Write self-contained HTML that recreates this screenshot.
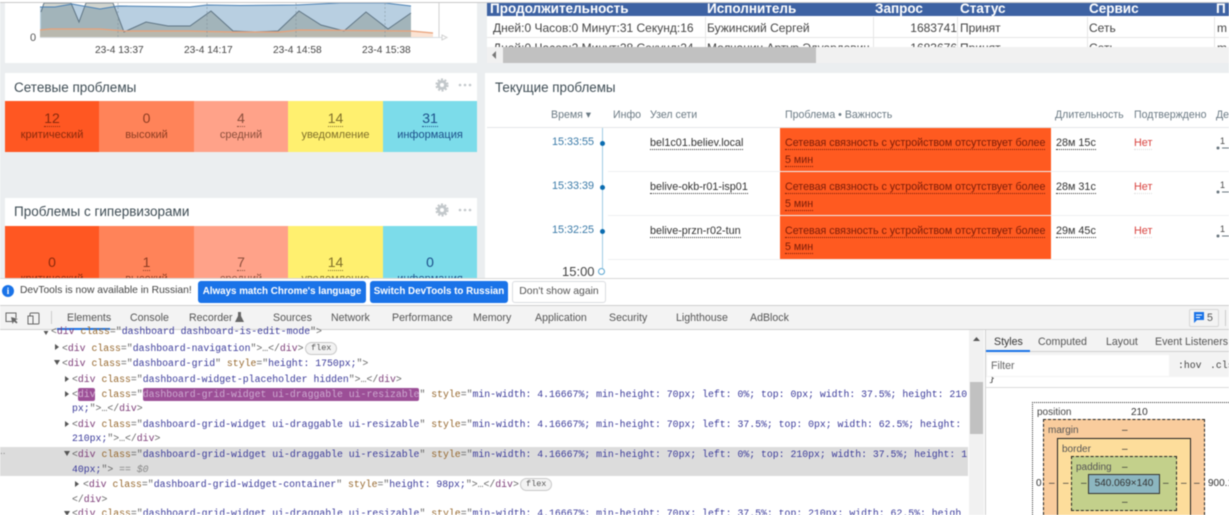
<!DOCTYPE html>
<html><head><meta charset="utf-8"><style>
html,body{margin:0;padding:0;width:1229px;height:515px;overflow:hidden;background:#fff}
body{font-family:"Liberation Sans",sans-serif;position:relative}
#w{position:absolute;left:0;top:0;width:1229px;height:515px;overflow:hidden;filter:blur(.45px)}
.a,.t{position:absolute}
.t{white-space:nowrap;line-height:14px}
.c{text-align:center}
.u{border-bottom:1px dotted currentColor}
.m{font-family:"Liberation Mono",monospace;font-size:9.82px;color:#666;line-height:14px;position:absolute;white-space:pre}
.g{color:#7c3c78}.n{color:#96682e}.v{color:#3b3b9a}
.s{color:#545454}
.h{position:absolute;top:-2px;font-weight:bold;color:#fff;font-size:13.5px;line-height:16px;white-space:nowrap}
.d{position:absolute;top:0;font-size:12px;color:#444;line-height:20px;white-space:nowrap}
.tab{position:absolute;top:311px;font-size:10.6px;line-height:14px;color:#555;white-space:nowrap}
.cell{position:absolute;text-align:center;font-size:11px;line-height:13px}
.num{font-size:14px;display:inline-block;line-height:15px;border-bottom:1px dotted currentColor;margin-bottom:2px}
.pill{position:absolute;border:1px solid #c8c8c8;border-radius:7px;background:#f3f3f3;color:#555;font:8.5px/10px "Liberation Mono",monospace;padding:0 5px;height:11px}
.ptext{color:#7a1d08;font-size:10.7px;line-height:14px;position:absolute;white-space:nowrap}
</style></head><body><div id="w">

<!-- page background -->
<div class="a" style="left:0;top:0;width:1229px;height:278px;background:#ebeef0"></div>
<div class="a" style="left:0;top:0;width:1229px;height:2px;background:#fff"></div>
<div class="a" style="left:0;top:2px;width:1229px;height:1px;background:#c9c9c9"></div>

<!-- chart widget -->
<div class="a" style="left:5px;top:3px;width:472px;height:60px;background:#fff"></div>
<svg class="a" style="left:0;top:3px" width="480" height="61" viewBox="0 3 480 61">
<polygon points="40,37 40,7 55,7 72,4 100,9 118,6 190,7 207,5 240,5.5 296,5 340,3 385,3 411,6 411,37" fill="#b8cfe1"/>
<polygon points="41,37 41,12 44,3 71,3 79,22 86,3 113,3 124,32 146,22 168,26 190,26 211,11 233,31 255,32 278,31 299,11 321,25 344,31 366,12 388,29 411,13 411,37" fill="#78826e" fill-opacity=".34"/>
<polygon points="40,37 40,30 50,29 100,29 124,31 190,31 233,32 280,32 299,30 411,31 411,37" fill="#b9b8ae"/>
<polygon points="411,31 433,33 433,37 411,37" fill="#fbe3d3"/>
<polyline points="41,12 44,3 71,3 79,22 86,3 113,3 124,32 146,22 168,26 190,26 211,11 233,31 255,32 278,31 299,11 321,25 344,31 366,12 388,29 411,13" fill="none" stroke="#5f7585" stroke-width="1"/>
<polyline points="40,7 55,7 72,4 100,9 118,6 190,7 207,5 240,5.5 296,5 340,3 385,3 411,6" fill="none" stroke="#4a80b4" stroke-width="1"/>
<polyline points="40,30 50,29 100,29 124,31 190,31 233,32 280,32 299,30 411,31 433,33" fill="none" stroke="#e9a27a" stroke-width="1.2"/>
<g stroke="#7d8b95" stroke-width=".5" stroke-dasharray="2 2"><line x1="118" y1="3" x2="118" y2="37"/><line x1="207" y1="3" x2="207" y2="37"/><line x1="296" y1="3" x2="296" y2="37"/><line x1="385" y1="3" x2="385" y2="37"/></g>
<line x1="439" y1="3" x2="439" y2="37" stroke="#d3d3d3"/>
<line x1="40" y1="37.5" x2="442" y2="37.5" stroke="#d8dde0"/>
<path d="M442 35l5 2.5-5 2.5z" fill="#fff" stroke="#d3d3d3"/>
</svg>
<div class="t" style="left:30px;top:31px;font-size:11px;color:#555">0</div>
<div class="t" style="left:95px;top:44px;font-size:10.2px;color:#444">23-4 13:37</div>
<div class="t" style="left:184px;top:44px;font-size:10.2px;color:#444">23-4 14:17</div>
<div class="t" style="left:273px;top:44px;font-size:10.2px;color:#444">23-4 14:58</div>
<div class="t" style="left:362px;top:44px;font-size:10.2px;color:#444">23-4 15:38</div>

<!-- widget 1 -->
<div class="a" style="left:5px;top:73px;width:472px;height:28px;background:#fff"></div>
<div class="t" style="left:14px;top:81px;font-size:13.5px;color:#3f4d55">Сетевые проблемы</div>
<svg class="a" style="left:435px;top:78px" width="40" height="14" viewBox="0 0 40 14"><circle cx="7" cy="7" r="3.5" fill="none" stroke="#c3c8cb" stroke-width="3"/><circle cx="7" cy="7" r="5.6" fill="none" stroke="#c3c8cb" stroke-width="2" stroke-dasharray="2 1.6"/><circle cx="25" cy="7" r="1.3" fill="#c3c8cb"/><circle cx="30" cy="7" r="1.3" fill="#c3c8cb"/><circle cx="35" cy="7" r="1.3" fill="#c3c8cb"/></svg>

<div class="a" style="left:5px;top:101px;width:94px;height:51px;background:#ff5722"></div>
<div class="a" style="left:99px;top:101px;width:95px;height:51px;background:#ff8359"></div>
<div class="a" style="left:194px;top:101px;width:94px;height:51px;background:#ffa289"></div>
<div class="a" style="left:288px;top:101px;width:95px;height:51px;background:#fff06f"></div>
<div class="a" style="left:383px;top:101px;width:94px;height:51px;background:#7cdcea"></div>
<div class="cell" style="left:5px;top:111px;width:94px;color:#8a2a0c"><span class="num">12</span><br>критический</div>
<div class="cell" style="left:99px;top:111px;width:95px;color:#8d3d22"><span class="num" style="border-color:transparent">0</span><br>высокий</div>
<div class="cell" style="left:194px;top:111px;width:94px;color:#8c4f3c"><span class="num">4</span><br>средний</div>
<div class="cell" style="left:288px;top:111px;width:95px;color:#80702a"><span class="num">14</span><br>уведомление</div>
<div class="cell" style="left:383px;top:111px;width:94px;color:#1c4f8a"><span class="num">31</span><br>информация</div>

<!-- widget 2 -->
<div class="a" style="left:5px;top:198px;width:472px;height:28px;background:#fff"></div>
<div class="t" style="left:14px;top:205px;font-size:13.5px;color:#3f4d55">Проблемы с гипервизорами</div>
<svg class="a" style="left:435px;top:203px" width="40" height="14" viewBox="0 0 40 14"><circle cx="7" cy="7" r="3.5" fill="none" stroke="#c3c8cb" stroke-width="3"/><circle cx="7" cy="7" r="5.6" fill="none" stroke="#c3c8cb" stroke-width="2" stroke-dasharray="2 1.6"/><circle cx="25" cy="7" r="1.3" fill="#c3c8cb"/><circle cx="30" cy="7" r="1.3" fill="#c3c8cb"/><circle cx="35" cy="7" r="1.3" fill="#c3c8cb"/></svg>
<div class="a" style="left:5px;top:226px;width:94px;height:52px;background:#ff5722"></div>
<div class="a" style="left:99px;top:226px;width:95px;height:52px;background:#ff8359"></div>
<div class="a" style="left:194px;top:226px;width:94px;height:52px;background:#ffa289"></div>
<div class="a" style="left:288px;top:226px;width:95px;height:52px;background:#fff06f"></div>
<div class="a" style="left:383px;top:226px;width:94px;height:52px;background:#7cdcea"></div>
<div class="cell" style="left:5px;top:255px;width:94px;color:#8a2a0c"><span class="num" style="border-color:transparent">0</span><br>критический</div>
<div class="cell" style="left:99px;top:255px;width:95px;color:#8d3d22"><span class="num">1</span><br>высокий</div>
<div class="cell" style="left:194px;top:255px;width:94px;color:#8c4f3c"><span class="num">7</span><br>средний</div>
<div class="cell" style="left:288px;top:255px;width:95px;color:#80702a"><span class="num">14</span><br>уведомление</div>
<div class="cell" style="left:383px;top:255px;width:94px;color:#1c4f8a"><span class="num" style="border-color:transparent">0</span><br>информация</div>

<!-- right table -->
<div class="a" style="left:487px;top:3px;width:742px;height:60px;background:#fff"></div>
<div class="a" style="left:487px;top:3px;width:742px;height:13px;background:#3d62a3;overflow:hidden">
 <div class="h" style="left:3px">Продолжительность</div>
 <div class="h" style="left:220px">Исполнитель</div>
 <div class="h" style="left:388px">Запрос</div>
 <div class="h" style="left:473px">Статус</div>
 <div class="h" style="left:602px">Сервис</div>
 <div class="h" style="left:729px">П</div>
</div>
<div class="a" style="left:487px;top:17px;width:742px;height:30px;overflow:hidden">
 <div class="d" style="left:6px;top:1px">Дней:0 Часов:0 Минут:31 Секунд:16</div>
 <div class="d" style="left:220px;top:1px">Бужинский Сергей</div>
 <div class="d" style="left:410px;top:1px;width:60px;text-align:right">1683741</div>
 <div class="d" style="left:473px;top:1px">Принят</div>
 <div class="d" style="left:602px;top:1px">Сеть</div>
 <div class="d" style="left:730px;top:1px">m</div>
 <div class="d" style="left:6px;top:21px">Дней:0 Часов:2 Минут:28 Секунд:24</div>
 <div class="d" style="left:220px;top:21px">Молчанин Артур Эдуардович</div>
 <div class="d" style="left:410px;top:21px;width:60px;text-align:right">1683676</div>
 <div class="d" style="left:473px;top:21px">Принят</div>
 <div class="d" style="left:602px;top:21px">Сеть</div>
 <div class="d" style="left:730px;top:21px">m</div>
 <div class="a" style="left:0;top:20px;width:742px;height:1px;background:#e6e6e6"></div>
 <div class="a" style="left:218px;top:0;width:1px;height:30px;background:#e6e6e6"></div>
 <div class="a" style="left:386px;top:0;width:1px;height:30px;background:#e6e6e6"></div>
 <div class="a" style="left:470px;top:0;width:1px;height:30px;background:#e6e6e6"></div>
 <div class="a" style="left:600px;top:0;width:1px;height:30px;background:#e6e6e6"></div>
 <div class="a" style="left:727px;top:0;width:1px;height:30px;background:#e6e6e6"></div>
</div>
<div class="a" style="left:487px;top:47px;width:742px;height:16px;background:#f1f1f1"></div>
<div class="a" style="left:503px;top:47px;width:313px;height:16px;background:#c1c1c1"></div>
<svg class="a" style="left:491px;top:51px" width="6" height="9"><path d="M5 0v8L1 4z" fill="#777"/></svg>

<!-- current problems -->
<div class="a" style="left:485px;top:73px;width:744px;height:205px;background:#fff"></div>
<div class="t" style="left:495px;top:81px;font-size:13.4px;color:#3f4d55">Текущие проблемы</div>
<div class="t" style="left:551px;top:108px;font-size:10.6px;color:#6b7a84">Время ▾</div>
<div class="t" style="left:613px;top:108px;font-size:10.6px;color:#6b7a84">Инфо</div>
<div class="t" style="left:650px;top:108px;font-size:10.6px;color:#6b7a84">Узел сети</div>
<div class="t" style="left:785px;top:108px;font-size:10.6px;color:#6b7a84">Проблема • Важность</div>
<div class="t" style="left:1055px;top:108px;font-size:10.6px;color:#6b7a84">Длительность</div>
<div class="t" style="left:1134px;top:108px;font-size:10.6px;color:#6b7a84">Подтверждено</div>
<div class="t" style="left:1216px;top:108px;font-size:10.6px;color:#6b7a84">Де</div>

<div class="a" style="left:487px;top:127px;width:742px;height:1px;background:#e3e6e8"></div>
<div class="a" style="left:608px;top:171px;width:621px;height:1px;background:#eef0f2"></div>
<div class="a" style="left:608px;top:215px;width:621px;height:1px;background:#eef0f2"></div>
<div class="a" style="left:608px;top:259px;width:621px;height:1px;background:#eef0f2"></div>

<div class="a" style="left:602px;top:128px;width:1px;height:140px;background:#9fcbe3"></div>
<div class="a" style="left:600px;top:141px;width:5px;height:5px;border-radius:50%;background:#0a6cb0"></div>
<div class="a" style="left:600px;top:185px;width:5px;height:5px;border-radius:50%;background:#0a6cb0"></div>
<div class="a" style="left:600px;top:229px;width:5px;height:5px;border-radius:50%;background:#0a6cb0"></div>
<div class="a" style="left:598px;top:268px;width:5px;height:5px;border-radius:50%;border:1.5px solid #5aa5d0;background:#fff"></div>

<div class="t" style="left:552px;top:135px;font-size:10.8px;color:#3a7aa8">15:33:55</div>
<div class="t" style="left:552px;top:179px;font-size:10.8px;color:#3a7aa8">15:33:39</div>
<div class="t" style="left:552px;top:223px;font-size:10.8px;color:#3a7aa8">15:32:25</div>
<div class="t" style="left:562px;top:265px;font-size:13px;color:#444">15:00</div>

<div class="t" style="left:650px;top:136px;font-size:10.8px;color:#333"><span class="u">bel1c01.believ.local</span></div>
<div class="t" style="left:650px;top:180px;font-size:10.8px;color:#333"><span class="u">belive-okb-r01-isp01</span></div>
<div class="t" style="left:650px;top:224px;font-size:10.8px;color:#333"><span class="u">belive-przn-r02-tun</span></div>

<div class="a" style="left:780px;top:128px;width:271px;height:43px;background:#ff5a20"></div>
<div class="a" style="left:780px;top:172px;width:271px;height:43px;background:#ff5a20"></div>
<div class="a" style="left:780px;top:216px;width:271px;height:43px;background:#ff5a20"></div>
<div class="ptext" style="left:785px;top:136px"><span class="u">Сетевая связность с устройством отсутствует более</span></div>
<div class="ptext" style="left:785px;top:153px"><span class="u">5 мин</span></div>
<div class="ptext" style="left:785px;top:180px"><span class="u">Сетевая связность с устройством отсутствует более</span></div>
<div class="ptext" style="left:785px;top:197px"><span class="u">5 мин</span></div>
<div class="ptext" style="left:785px;top:224px"><span class="u">Сетевая связность с устройством отсутствует более</span></div>
<div class="ptext" style="left:785px;top:240px"><span class="u">5 мин</span></div>

<div class="t" style="left:1056px;top:136px;font-size:10.8px;color:#333"><span class="u">28м 15с</span></div>
<div class="t" style="left:1056px;top:180px;font-size:10.8px;color:#333"><span class="u">28м 31с</span></div>
<div class="t" style="left:1056px;top:224px;font-size:10.8px;color:#333"><span class="u">29м 45с</span></div>
<div class="t" style="left:1134px;top:136px;font-size:10.8px;color:#d8423e"><span class="u" style="border-color:#ddd">Нет</span></div>
<div class="t" style="left:1134px;top:180px;font-size:10.8px;color:#d8423e"><span class="u" style="border-color:#ddd">Нет</span></div>
<div class="t" style="left:1134px;top:224px;font-size:10.8px;color:#d8423e"><span class="u" style="border-color:#ddd">Нет</span></div>
<svg class="a" style="left:1215px;top:136px" width="14" height="120" viewBox="0 0 14 120">
<g font-family="Liberation Sans" font-size="9" fill="#444"><text x="5" y="8">1</text><text x="5" y="52">1</text><text x="5" y="96">1</text></g>
<g fill="#68757d" stroke="#68757d"><circle cx="3" cy="12" r="1"/><path d="M7 12h7"/><circle cx="3" cy="56" r="1"/><path d="M7 56h7"/><circle cx="3" cy="100" r="1"/><path d="M7 100h7"/></g></svg>

<!-- infobar -->
<div class="a" style="left:0;top:278px;width:1229px;height:1px;background:#d8d8d8"></div>
<div class="a" style="left:0;top:279px;width:1229px;height:26px;background:#fff"></div>
<div class="a" style="left:2px;top:285px;width:12px;height:12px;border-radius:50%;background:#1a73e8;color:#fff;font:bold 9px/12px 'Liberation Serif',serif;text-align:center">i</div>
<div class="t" style="left:20px;top:284px;font-size:10.3px;color:#444">DevTools is now available in Russian!</div>
<div class="a" style="left:198px;top:281px;width:168px;height:22px;background:#1a73e8;border-radius:3px;color:#fff;font-size:9.8px;font-weight:bold;line-height:22px;text-align:center;white-space:nowrap">Always match Chrome's language</div>
<div class="a" style="left:370px;top:281px;width:138px;height:22px;background:#1a73e8;border-radius:3px;color:#fff;font-size:9.8px;font-weight:bold;line-height:22px;text-align:center;white-space:nowrap">Switch DevTools to Russian</div>
<div class="a" style="left:512px;top:281px;width:92px;height:20px;border:1px solid #dadce0;border-radius:3px;color:#555;font-size:10.4px;line-height:20px;text-align:center;white-space:nowrap">Don't show again</div>

<!-- toolbar -->
<div class="a" style="left:0;top:305px;width:1229px;height:1px;background:#cfcfcf"></div>
<div class="a" style="left:0;top:306px;width:1229px;height:23px;background:#f3f3f3"></div>
<div class="a" style="left:0;top:329px;width:1229px;height:1px;background:#d0d0d0"></div>
<svg class="a" style="left:3px;top:310px" width="40" height="16" viewBox="0 0 40 16" fill="none" stroke="#666">
<path d="M9 11.500H3V3h10v5"/><path d="M8 7l1.500 7 1.500-2.500 2.500 2 1-1-2-2.500 2.500-1z" fill="#666" stroke="none"/>
<rect x="27" y="3" width="9" height="11" rx="1"/><rect x="25" y="6" width="5" height="8" fill="#f3f3f3"/></svg>
<div class="a" style="left:51px;top:311px;width:1px;height:13px;background:#ccc"></div>
<div class="tab" style="left:67px">Elements</div>
<div class="tab" style="left:130px">Console</div>
<div class="tab" style="left:189px">Recorder</div>
<svg class="a" style="left:235px;top:312px" width="9" height="10"><path d="M3 0h3v4l3 6H0l3-6z" fill="#666"/></svg>
<div class="tab" style="left:273px">Sources</div>
<div class="tab" style="left:331px">Network</div>
<div class="tab" style="left:392px">Performance</div>
<div class="tab" style="left:473px">Memory</div>
<div class="tab" style="left:535px">Application</div>
<div class="tab" style="left:609px">Security</div>
<div class="tab" style="left:676px">Lighthouse</div>
<div class="tab" style="left:750px">AdBlock</div>
<div class="a" style="left:57px;top:328px;width:53px;height:2px;background:#1a73e8"></div>
<div class="a" style="left:1189px;top:309px;width:30px;height:18px;border:1px solid #d6d6d6;border-radius:2px;box-sizing:border-box"></div>
<svg class="a" style="left:1194px;top:312px" width="11" height="12"><path d="M0 0h10v8H3L0 11z" fill="#1a73e8"/><path d="M2 3h6M2 5.500h4" stroke="#fff"/></svg>
<div class="t" style="left:1207px;top:311px;font-size:10.6px;color:#555">5</div>
<div class="a" style="left:1225px;top:310px;width:1px;height:16px;background:#ccc"></div>

<!-- DOM panel -->
<div class="a" style="left:0;top:447px;width:968px;height:29px;background:#dcdcdc"></div>
<div class="t" style="left:0;top:445px;font-size:10px;color:#888">..</div>
<div class="a" style="left:78px;top:388px;width:17px;height:13px;background:#9c4f97;border-radius:2px"></div>
<div class="a" style="left:143px;top:388px;width:276px;height:13px;background:#9c4f97;border-radius:2px"></div>

<svg class="a" style="left:0;top:331px" width="90" height="184" viewBox="0 0 90 184" fill="#555">
<path d="M43 -1h6l-3 5z"/><path d="M55 13v6l4-3z"/><path d="M54 29h6l-3 5z"/><path d="M65 45v6l4-3z"/><path d="M65 60v6l4-3z"/><path d="M65 90v6l4-3z"/><path d="M64 120h6l-3 5z"/><path d="M75 150v6l4-3z"/><path d="M64 180h6l-3 5z"/></svg>

<div class="m" style="left:51px;top:325px">&lt;<span class="g">div</span> <span class="n">class</span>="<span class="v">dashboard dashboard-is-edit-mode</span>"&gt;</div>
<div class="m" style="left:62px;top:342px">&lt;<span class="g">div</span> <span class="n">class</span>="<span class="v">dashboard-navigation</span>"&gt;…&lt;/<span class="g">div</span>&gt;</div>
<div class="pill" style="left:305px;top:342px">flex</div>
<div class="m" style="left:62px;top:357px">&lt;<span class="g">div</span> <span class="n">class</span>="<span class="v">dashboard-grid</span>" <span class="n">style</span>="<span class="v">height: 1750px;</span>"&gt;</div>
<div class="m" style="left:72px;top:373px">&lt;<span class="g">div</span> <span class="n">class</span>="<span class="v">dashboard-widget-placeholder hidden</span>"&gt;…&lt;/<span class="g">div</span>&gt;</div>
<div class="m" style="left:72px;top:388px">&lt;<span style="color:#d6b4d4">div</span> <span class="n">class</span>="<span style="color:#cda9d0">dashboard-grid-widget ui-draggable ui-resizable</span>" <span class="n">style</span>="<span class="v">min-width: 4.16667%; min-height: 70px; left: 0%; top: 0px; width: 37.5%; height: 210</span></div>
<div class="m" style="left:72px;top:402px"><span class="v">px;</span>"&gt;…&lt;/<span class="g">div</span>&gt;</div>
<div class="m" style="left:72px;top:418px">&lt;<span class="g">div</span> <span class="n">class</span>="<span class="v">dashboard-grid-widget ui-draggable ui-resizable</span>" <span class="n">style</span>="<span class="v">min-width: 4.16667%; min-height: 70px; left: 37.5%; top: 0px; width: 62.5%; height:</span></div>
<div class="m" style="left:72px;top:432px"><span class="v">210px;</span>"&gt;…&lt;/<span class="g">div</span>&gt;</div>
<div class="m" style="left:72px;top:448px">&lt;<span class="g">div</span> <span class="n">class</span>="<span class="v">dashboard-grid-widget ui-draggable ui-resizable</span>" <span class="n">style</span>="<span class="v">min-width: 4.16667%; min-height: 70px; left: 0%; top: 210px; width: 37.5%; height: 1</span></div>
<div class="m" style="left:72px;top:463px"><span class="v">40px;</span>"&gt; <i style="color:#888">== $0</i></div>
<div class="m" style="left:83px;top:478px">&lt;<span class="g">div</span> <span class="n">class</span>="<span class="v">dashboard-grid-widget-container</span>" <span class="n">style</span>="<span class="v">height: 98px;</span>"&gt;…&lt;/<span class="g">div</span>&gt;</div>
<div class="pill" style="left:520px;top:478px">flex</div>
<div class="m" style="left:72px;top:493px">&lt;/<span class="g">div</span>&gt;</div>
<div class="m" style="left:72px;top:507px">&lt;<span class="g">div</span> <span class="n">class</span>="<span class="v">dashboard-grid-widget ui-draggable ui-resizable</span>" <span class="n">style</span>="<span class="v">min-width: 4.16667%; min-height: 70px; left: 37.5%; top: 210px; width: 62.5%; heigh</span></div>

<!-- scrollbar -->
<div class="a" style="left:969px;top:330px;width:15px;height:185px;background:#f1f1f1"></div>
<div class="a" style="left:970px;top:382px;width:13px;height:52px;background:#c1c1c1"></div>
<svg class="a" style="left:972px;top:336px" width="9" height="6"><path d="M4.500 1L8 5H1z" fill="#555"/></svg>

<!-- styles panel -->
<div class="a" style="left:985px;top:330px;width:1px;height:185px;background:#d0d0d0"></div>
<div class="a" style="left:986px;top:330px;width:243px;height:22px;background:#f3f3f3"></div>
<div class="a" style="left:986px;top:351px;width:243px;height:1px;background:#d0d0d0"></div>
<div class="a" style="left:986px;top:350px;width:44px;height:2px;background:#1a73e8"></div>
<div class="t" style="left:994px;top:335px;font-size:10.6px;color:#333">Styles</div>
<div class="t" style="left:1038px;top:335px;font-size:10.6px;color:#555">Computed</div>
<div class="t" style="left:1106px;top:335px;font-size:10.6px;color:#555">Layout</div>
<div class="t" style="left:1155px;top:335px;font-size:10.6px;color:#555">Event Listeners</div>
<div class="a" style="left:986px;top:352px;width:243px;height:25px;background:#f3f3f3"></div>
<div class="a" style="left:987px;top:355px;width:182px;height:21px;background:#fff"></div>
<div class="t" style="left:991px;top:359px;font-size:10.6px;color:#666">Filter</div>
<div class="t" style="left:1178px;top:359px;font:9.82px/14px 'Liberation Mono',monospace;color:#444">:hov</div>
<div class="t" style="left:1210px;top:359px;font:9.82px/14px 'Liberation Mono',monospace;color:#444">.cls</div>
<div class="a" style="left:986px;top:377px;width:243px;height:10px;background:#fff;overflow:hidden"><div class="t" style="left:3px;top:-5px;font:9.82px/14px 'Liberation Mono',monospace;color:#333">}</div></div>
<div class="a" style="left:986px;top:387px;width:243px;height:1px;background:#dcdcdc"></div>

<!-- box model -->
<div class="a" style="left:1032px;top:402px;width:197px;height:113px;box-sizing:border-box;border-top:1px dotted #333;border-left:1px dotted #333"></div>
<div class="a" style="left:1043px;top:419px;width:162px;height:96px;box-sizing:border-box;background:#f9cc9d;border:1px dashed #222;border-bottom:0"></div>
<div class="a" style="left:1057px;top:438px;width:134px;height:77px;box-sizing:border-box;background:#fddd9b;border:1px solid #222;border-bottom:0"></div>
<div class="a" style="left:1071px;top:456px;width:106px;height:55px;box-sizing:border-box;background:#c3d08b;border:1px dashed #222"></div>
<div class="a" style="left:1088px;top:474px;width:72px;height:20px;box-sizing:border-box;background:#8cb6c0;border:1px solid #333;font-size:10px;line-height:18px;color:#333;text-align:center;white-space:nowrap">540.069×140</div>
<div class="t" style="left:1037px;top:406px;font-size:10px;color:#444">position</div>
<div class="t" style="left:1131px;top:406px;font-size:10px;color:#333">210</div>
<div class="t" style="left:1048px;top:424px;font-size:10px;color:#555">margin</div>
<div class="t" style="left:1062px;top:443px;font-size:10px;color:#555">border</div>
<div class="t" style="left:1076px;top:461px;font-size:10px;color:#555">padding</div>
<div class="t" style="left:1122px;top:424px;font-size:10px;color:#333">–</div>
<div class="t" style="left:1122px;top:443px;font-size:10px;color:#333">–</div>
<div class="t" style="left:1122px;top:461px;font-size:10px;color:#333">–</div>
<div class="t" style="left:1122px;top:496px;font-size:10px;color:#333">–</div>
<div class="t" style="left:1036px;top:477px;font-size:10px;color:#333">0</div>
<div class="t" style="left:1049px;top:477px;font-size:10px;color:#333">–</div>
<div class="t" style="left:1063px;top:477px;font-size:10px;color:#333">–</div>
<div class="t" style="left:1081px;top:477px;font-size:10px;color:#333">–</div>
<div class="t" style="left:1163px;top:477px;font-size:10px;color:#333">–</div>
<div class="t" style="left:1181px;top:477px;font-size:10px;color:#333">–</div>
<div class="t" style="left:1194px;top:477px;font-size:10px;color:#333">–</div>
<div class="t" style="left:1208px;top:477px;font-size:10px;color:#333">900.1</div>

</div></body></html>
